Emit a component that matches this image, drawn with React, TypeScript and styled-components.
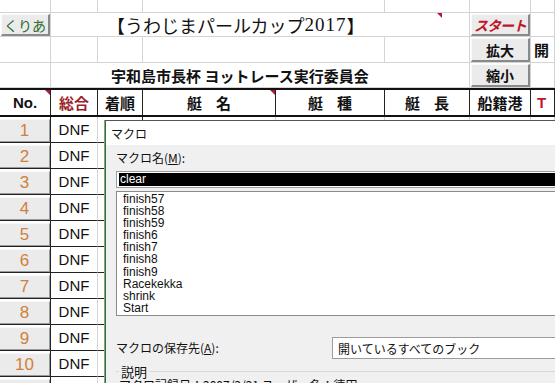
import styled, { createGlobalStyle } from "styled-components";

const GlobalStyle = createGlobalStyle`
  html, body {
    margin: 0;
    padding: 0;
    background: #ffffff;
  }
  #root {
    width: 555px;
    height: 383px;
    overflow: hidden;
    position: relative;
  }
`;

const JP = `"Noto Sans CJK JP", "Liberation Sans", sans-serif`;
const UI = `"Liberation Sans", "Noto Sans CJK JP", sans-serif`;

const TOP_COLS = "51px 47px 45px 242px 85px 61px 1fr";
const COLS = "51px 47px 45px 133px 109px 85px 61px 1fr";
const GRID = "#d4d4d4";

const rows = [1, 2, 3, 4, 5, 6, 7, 8, 9, 10, 11].map((no) => ({ no, res: "DNF" }));

const macros = [
  "finish57",
  "finish58",
  "finish59",
  "finish6",
  "finish7",
  "finish8",
  "finish9",
  "Racekekka",
  "shrink",
  "Start",
];

export default function App() {
  return (
    <>
      <GlobalStyle />
      <Sheet>
        <TopGrid>
          {/* row 1 */}
          {Array.from({ length: 7 }).map((_, i) => (
            <Cell key={"r1" + i} $h={13} />
          ))}
          {/* row 2 */}
          <Cell $h={24}>
            <SheetButton $color="#2f6b2f">くりあ</SheetButton>
          </Cell>
          <TitleCell $h={24} $span={4}>
            【うわじまパールカップ<Digits>2017</Digits>】
            <Marker $right={27} />
          </TitleCell>
          <Cell $h={24}>
            <StartButton>スタート</StartButton>
          </Cell>
          <Cell $h={24} />
          {/* row 3 */}
          <Cell $h={26} />
          <Cell $h={26} />
          <Cell $h={26} />
          <Cell $h={26} />
          <Cell $h={26} />
          <Cell $h={26}>
            <SheetButton $bold>拡大</SheetButton>
          </Cell>
          <Cell $h={26}>
            <SideText>開</SideText>
          </Cell>
          {/* row 4 */}
          <Cell $h={25} />
          <SubTitleCell $h={25} $span={4}>宇和島市長杯 ヨットレース実行委員会</SubTitleCell>
          <Cell $h={25}>
            <SheetButton $bold>縮小</SheetButton>
          </Cell>
          <Cell $h={25} />
        </TopGrid>

        <HeaderGrid>
          <HeadCell>
            No.
            <Marker />
          </HeadCell>
          <HeadCell $color="#9c1f2a">総合</HeadCell>
          <HeadCell>着順</HeadCell>
          <HeadCell $spaced>
            艇 名
            <Marker />
          </HeadCell>
          <HeadCell $spaced>艇 種</HeadCell>
          <HeadCell $spaced>艇 長</HeadCell>
          <HeadCell>船籍港</HeadCell>
          <HeadCell $color="#c0182a" $left>
            T
          </HeadCell>
        </HeaderGrid>

        <DataGrid>
          {rows.map((r) => (
            <DataRow key={r.no}>
              <NoCell>
                <NoButton>{r.no}</NoButton>
              </NoCell>
              <DataCell>{r.res}</DataCell>
              <DataCell $strong />
              <DataCell />
              <DataCell />
              <DataCell />
              <DataCell />
              <DataCell />
            </DataRow>
          ))}
        </DataGrid>
      </Sheet>

      <Dialog>
        <TitleBar>マクロ</TitleBar>
        <DialogBody>
          <Label>
            マクロ名(<u>M</u>):
          </Label>
          <NameInput>
            <Selected>clear</Selected>
          </NameInput>
          <ListBox>
            {macros.map((m) => (
              <ListItem key={m}>{m}</ListItem>
            ))}
          </ListBox>
          <StoreRow>
            <Label>
              マクロの保存先(<u>A</u>):
            </Label>
            <Combo>開いているすべてのブック</Combo>
          </StoreRow>
          <Group>
            <GroupLegend>説明</GroupLegend>
            <GroupText>マクロ記録日：2007/3/21 ユーザー名：徳田</GroupText>
          </Group>
        </DialogBody>
      </Dialog>
    </>
  );
}

const Sheet = styled.div`
  width: 555px;
  display: flex;
  flex-direction: column;
`;

const TopGrid = styled.div`
  display: grid;
  grid-template-columns: ${TOP_COLS};
`;

const Cell = styled.div<{ $h: number }>`
  position: relative;
  height: ${(p) => p.$h}px;
  box-sizing: border-box;
  border-right: 1px solid ${GRID};
  border-bottom: 1px solid ${GRID};
  display: flex;
  align-items: center;
  justify-content: center;
`;

const TitleCell = styled(Cell)<{ $span: number }>`
  grid-column: span ${(p) => p.$span};
  justify-content: flex-start;
  padding-left: 56px;
  font-family: ${JP};
  font-size: 18px;
  color: #111;
  white-space: nowrap;
`;

const Digits = styled.span`
  font-family: "Liberation Serif", serif;
  font-size: 19px;
  letter-spacing: 1px;
`;

const SubTitleCell = styled(Cell)<{ $span: number }>`
  grid-column: span ${(p) => p.$span};
  justify-content: flex-start;
  padding-left: 60px;
  font-family: ${JP};
  font-weight: 700;
  font-size: 15px;
  color: #111;
  white-space: nowrap;
`;

const SheetButton = styled.div<{ $color?: string; $bold?: boolean }>`
  position: absolute;
  left: 1px;
  top: 1px;
  right: 0;
  bottom: 0;
  box-sizing: border-box;
  background: #ebebeb;
  border-top: 1px solid #fafafa;
  border-left: 1px solid #fafafa;
  border-right: 2px solid #8a8a8a;
  border-bottom: 2px solid #8a8a8a;
  display: flex;
  align-items: center;
  justify-content: center;
  font-family: ${JP};
  font-size: 14px;
  font-weight: ${(p) => (p.$bold ? 700 : 400)};
  color: ${(p) => p.$color ?? "#111"};
  z-index: 2;
`;

const StartButton = styled(SheetButton)`
  font-weight: 700;
  font-style: italic;
  color: #c0182a;
  letter-spacing: -1px;
`;

const SideText = styled.span`
  font-family: ${JP};
  font-weight: 700;
  font-size: 15px;
  color: #111;
  margin-left: -2px;
`;

const Marker = styled.span<{ $right?: number }>`
  position: absolute;
  top: 0;
  right: ${(p) => p.$right ?? 0}px;
  width: 0;
  height: 0;
  border-top: 5px solid #b01a3a;
  border-left: 5px solid transparent;
  z-index: 3;
`;

const HeaderGrid = styled.div`
  display: grid;
  grid-template-columns: ${COLS};
  border-top: 2px solid #111;
  border-bottom: 2px solid #111;
  height: 29px;
  box-sizing: border-box;
`;

const HeadCell = styled.div<{ $color?: string; $spaced?: boolean; $left?: boolean }>`
  position: relative;
  border-right: 1px solid #222;
  display: flex;
  align-items: center;
  justify-content: ${(p) => (p.$left ? "flex-start" : "center")};
  padding-left: ${(p) => (p.$left ? "6px" : "0")};
  font-family: ${UI};
  font-weight: 700;
  font-size: 15px;
  color: ${(p) => p.$color ?? "#111"};
  word-spacing: ${(p) => (p.$spaced ? "10px" : "0")};
  white-space: pre;
`;

const DataGrid = styled.div`
  display: flex;
  flex-direction: column;
`;

const DataRow = styled.div`
  display: grid;
  grid-template-columns: ${COLS};
  height: 26px;
`;

const NoCell = styled.div`
  border-right: 1px solid #222;
  border-bottom: 1px solid #222;
  padding: 2px 0 0 0;
  box-sizing: border-box;
  display: flex;
`;

const NoButton = styled.div`
  flex: 1;
  background: #ebebeb;
  border-top: 1px solid #f8f8f8;
  border-right: 1px solid #9a9a9a;
  border-bottom: 1px solid #9a9a9a;
  display: flex;
  align-items: center;
  justify-content: center;
  font-family: ${UI};
  font-size: 17px;
  color: #d0803a;
`;

const DataCell = styled.div<{ $strong?: boolean }>`
  border-right: 1px solid ${(p) => (p.$strong ? "#222" : GRID)};
  border-bottom: 1px solid #222;
  display: flex;
  align-items: center;
  justify-content: center;
  font-family: ${UI};
  font-size: 15px;
  color: #111;
`;

const Dialog = styled.div`
  position: absolute;
  left: 105px;
  top: 120px;
  width: 470px;
  height: 290px;
  border-left: 1px solid #3c6a3c;
  border-top: 1px solid #555;
  box-shadow: -1px 0 0 #7fa57f;
  background: #f0f0f0;
  display: flex;
  flex-direction: column;
  font-family: ${JP};
  font-size: 12px;
  color: #111;
`;

const TitleBar = styled.div`
  height: 24px;
  background: #ffffff;
  display: flex;
  align-items: center;
  padding-left: 5px;
  font-size: 12px;
`;

const DialogBody = styled.div`
  display: flex;
  flex-direction: column;
  padding: 5px 0 0 10px;
`;

const Label = styled.div`
  font-family: ${JP};
  font-size: 12px;
  height: 16px;
  line-height: 16px;
  color: #111;
  u {
    text-decoration: underline;
  }
`;

const NameInput = styled.div`
  margin-top: 5px;
  height: 17px;
  box-sizing: border-box;
  border: 1px solid #9c9c9c;
  background: #fff;
  padding: 1px 0 1px 2px;
  display: flex;
`;

const Selected = styled.div`
  flex: 1;
  background: #000;
  color: #fff;
  font-family: ${UI};
  font-size: 12px;
  line-height: 13px;
  padding-left: 1px;
`;

const ListBox = styled.div`
  margin-top: 3px;
  height: 125px;
  box-sizing: border-box;
  border: 1px solid #8a8a8a;
  background: #fff;
  padding: 1px 0 0 6px;
  display: flex;
  flex-direction: column;
`;

const ListItem = styled.div`
  font-family: ${UI};
  font-size: 12px;
  line-height: 12.1px;
  height: 12.1px;
  color: #111;
`;

const StoreRow = styled.div`
  margin-top: 21px;
  display: grid;
  grid-template-columns: 216px 1fr;
  align-items: center;
`;

const Combo = styled.div`
  height: 22px;
  box-sizing: border-box;
  border: 1px solid #9c9c9c;
  background: #fff;
  display: flex;
  align-items: center;
  padding-left: 5px;
  font-family: ${JP};
  font-size: 12px;
`;

const Group = styled.div`
  margin-top: 12px;
  position: relative;
  border-top: 1px solid #d8d8d8;
  padding: 4px 0 0 0;
`;

const GroupLegend = styled.span`
  position: absolute;
  left: 3px;
  top: -8px;
  background: #f0f0f0;
  padding: 0 2px;
  font-family: ${JP};
  font-size: 13px;
  line-height: 16px;
`;

const GroupText = styled.div`
  padding-left: 3px;
  font-family: ${JP};
  font-size: 12px;
  white-space: nowrap;
`;
